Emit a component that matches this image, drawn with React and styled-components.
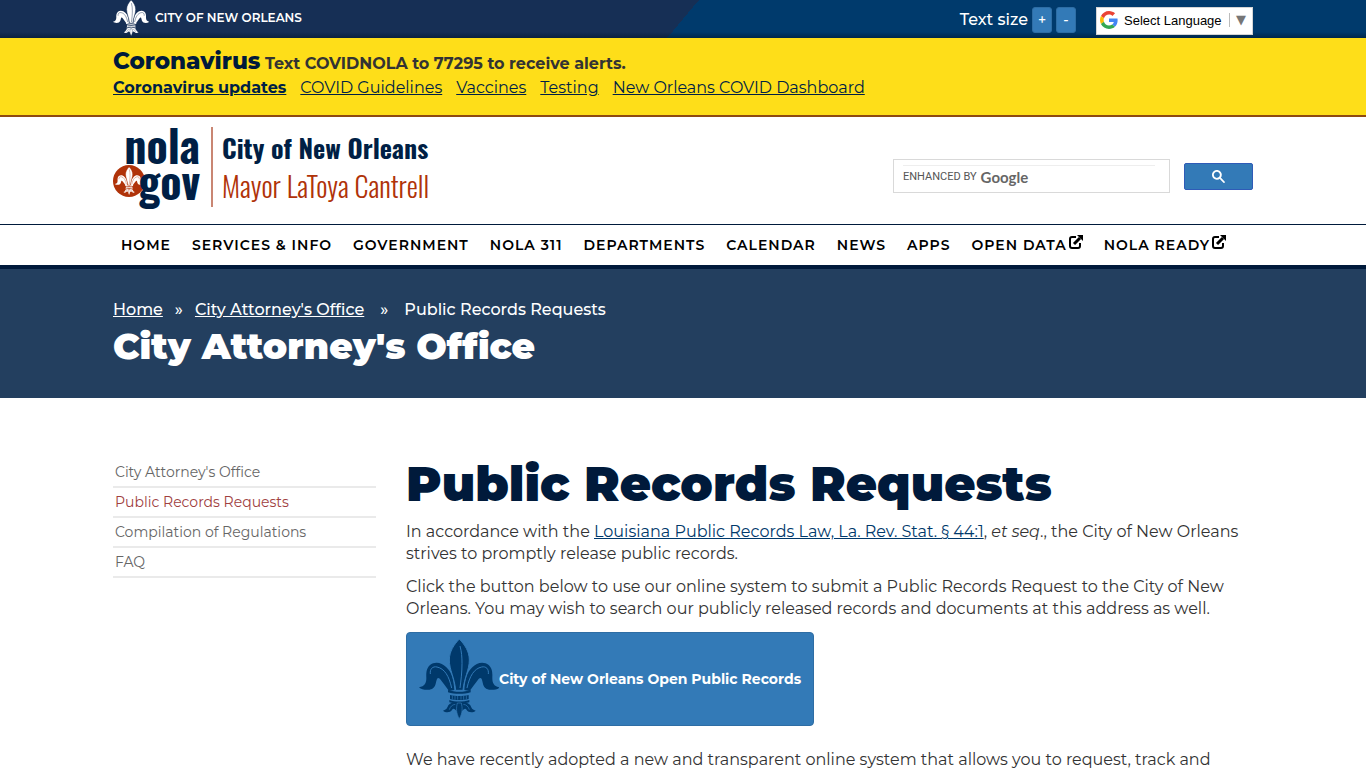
import React from 'react';
import styled, { createGlobalStyle, ThemeProvider } from 'styled-components';

const theme = {
  colors: {
    navy: '#001f45',
    navyDark: '#001a3b',
    hero: '#233f5f',
    blue: '#337ab7',
    blueBorder: '#2e6da4',
    yellow: '#fede19',
    rust: '#b03309',
    text: '#333333',
    muted: '#666666',
    line: '#eaeaea',
    white: '#ffffff',
  },
  fonts: {
    base: "Montserrat, Inter, 'Open Sans', sans-serif",
    logo: "Oswald, 'Roboto Condensed', 'Liberation Sans Narrow', 'Liberation Sans', sans-serif",
  },
};

const navItems = [
  { label: 'Home' },
  { label: 'Services & Info' },
  { label: 'Government' },
  { label: 'NOLA 311' },
  { label: 'Departments' },
  { label: 'Calendar' },
  { label: 'News' },
  { label: 'Apps' },
  { label: 'Open Data', external: true },
  { label: 'NOLA Ready', external: true },
];

const alertLinks = ['COVID Guidelines', 'Vaccines', 'Testing', 'New Orleans COVID Dashboard'];

const sideItems = [
  { label: "City Attorney's Office" },
  { label: 'Public Records Requests', active: true },
  { label: 'Compilation of Regulations' },
  { label: 'FAQ' },
];

const FleurWing = ({ line }) => (
  <>
    <path d="M163 210 C161 180 155 156 139 142 C126 127 104 123 90 135 C77 147 79 162 79 174 C79 190 74 199 57 202 C66 211 86 211 96 207 C108 201 107 186 111 177 C114 172 118 174 123 181 C131 192 139 202 147 213 Z" />
    <path d="M91 162 C89 147 98 138 111 141 C134 146 147 168 155 204" fill="none" stroke={line} strokeWidth="3" />
    <path d="M172 247 C160 246 150 249 145 256 C142 264 139 270 129 272 C137 279 151 278 156 270 C159 264 165 266 170 274 Z" />
    <path d="M166 253 C156 254 151 260 148 269" fill="none" stroke={line} strokeWidth="2" />
  </>
);

const FleurDeLis = ({ size, color, line }) => (
  <svg width={size} height={size} viewBox="57 57 240 240" fill={color} aria-hidden="true">
    <FleurWing line={line} />
    <g transform="translate(356 0) scale(-1 1)">
      <FleurWing line={line} />
    </g>
    <path
      d="M178 57 C162 74 148 94 148 120 C148 150 164 174 167 211 L189 211 C192 174 208 150 208 120 C208 94 194 74 178 57 Z"
      stroke={line}
      strokeWidth="3"
    />
    <path d="M180 78 C185 96 186 112 186 130 C186 158 183 180 180 204" fill="none" stroke={line} strokeWidth="3" />
    <path d="M144 210 C164 217 192 217 212 210 L212 217 C192 223 164 223 144 217 Z" />
    <path d="M150 225 C166 229 190 229 206 225 L206 237 C190 241 166 241 150 237 Z" />
    <path d="M157 227 V238 M165 228 V239 M173 228 V239 M183 228 V239 M191 228 V239 M199 227 V238" stroke={line} strokeWidth="2" />
    <path d="M148 240 C166 246 190 246 208 240 L208 247 C190 252 166 252 148 247 Z" />
    <path d="M172 249 H184 C187 262 189 278 178 296 C167 278 169 262 172 249 Z" stroke={line} strokeWidth="2" />
  </svg>
);

const GoogleMark = () => (
  <svg width="18" height="18" viewBox="0 0 48 48" aria-hidden="true">
    <path fill="#EA4335" d="M24 9.5c3.5 0 6.700 1.200 9.200 3.600l6.900-6.900C35.900 2.400 30.500 0 24 0 14.600 0 6.500 5.400 2.600 13.200l8 6.200C12.400 13.700 17.700 9.500 24 9.500z" />
    <path fill="#4285F4" d="M47 24.600c0-1.600-.2-3.100-.4-4.600H24v9h12.900c-.6 3-2.300 5.500-4.800 7.200l7.700 6C44.400 38 47 32 47 24.600z" />
    <path fill="#FBBC05" d="M10.500 28.600c-.5-1.500-.8-3-.8-4.600s.3-3.100.8-4.600l-8-6.200C.9 16.500 0 20.100 0 24s.9 7.500 2.600 10.800l7.900-6.200z" />
    <path fill="#34A853" d="M24 48c6.500 0 11.900-2.100 15.900-5.800l-7.700-6c-2.200 1.500-4.900 2.300-8.200 2.300-6.300 0-11.600-4.200-13.500-9.900l-8 6.200C6.500 42.600 14.600 48 24 48z" />
  </svg>
);

const ExternalIcon = () => (
  <svg width="14" height="14" viewBox="0 0 14 14" fill="none" stroke="currentColor" strokeWidth="2" aria-hidden="true">
    <path d="M7 2 H3 Q1 2 1 4 V11 Q1 13 3 13 H9 Q11 13 11 11 V8" />
    <path d="M5 9 L11 3" strokeWidth="3" />
    <path d="M8 0 H14 V6 Z" fill="currentColor" stroke="none" />
  </svg>
);

const SearchIcon = () => (
  <svg width="13" height="13" viewBox="0 0 13 13" fill="currentColor" aria-hidden="true">
    <path d="m4.850 7.900c-1.650 0-3.050-1.400-3.050-3.050s1.400-3.050 3.050-3.050 3.050 1.400 3.050 3.050-1.400 3.050-3.050 3.050zm4.450.2-.3 0-.2-.2c.6-.8 1-1.850 1-3.050 0-2.700-2.200-4.850-4.900-4.850s-4.900 2.200-4.900 4.850 2.200 4.900 4.900 4.900c1.200 0 2.300-.4 3.100-1.100l.2.200 0 .6 3.750 3.750 1.100-1.100z" />
  </svg>
);

const App = () => (
  <ThemeProvider theme={theme}>
    <GlobalStyle />
    <TopBar>
      <TopInner>
        <CityLink href="#city">
          <FleurDeLis size={36} color="#ffffff" line="#162f55" />
          City of New Orleans
        </CityLink>
        <TopTools>
          <TextSize>
            Text size
            <SizeButton type="button" aria-label="Increase text size">+</SizeButton>
            <SizeButton type="button" aria-label="Decrease text size">-</SizeButton>
          </TextSize>
          <Language>
            <GoogleMark />
            <LanguageSelect aria-label="Language">
              <option>Select Language</option>
            </LanguageSelect>
            <LanguageArrow aria-hidden="true">▼</LanguageArrow>
          </Language>
        </TopTools>
      </TopInner>
    </TopBar>

    <Alert>
      <Container>
        <AlertText>
          <AlertTitle>Coronavirus</AlertTitle> Text COVIDNOLA to 77295 to receive alerts.
        </AlertText>
        <AlertLinks>
          <AlertLink href="#updates" $strong>Coronavirus updates</AlertLink>
          {alertLinks.map((label) => (
            <AlertLink key={label} href="#covid">{label}</AlertLink>
          ))}
        </AlertLinks>
      </Container>
    </Alert>

    <HeaderInner>
      <Brand href="#home">
        <Wordmark>
          <WordmarkLine>nola</WordmarkLine>
          <WordmarkLine>
            <Seal>
              <FleurDeLis size={28} color="#ffffff" line="#b03309" />
            </Seal>
            gov
          </WordmarkLine>
        </Wordmark>
        <BrandText>
          <BrandCity>City of New Orleans</BrandCity>
          <BrandMayor>Mayor LaToya Cantrell</BrandMayor>
        </BrandText>
      </Brand>
      <SearchForm>
        <SearchBox>
          <SearchField>
            <SearchBrand>ENHANCED BY</SearchBrand>
            <SearchGoogle>Google</SearchGoogle>
            <SearchInput type="text" aria-label="Search" />
          </SearchField>
        </SearchBox>
        <SearchButton type="button" aria-label="Search">
          <SearchIcon />
        </SearchButton>
      </SearchForm>
    </HeaderInner>

    <Nav>
      <NavList>
        {navItems.map((item) => (
          <li key={item.label}>
            <NavLink href="#nav">
              {item.label}
              {item.external && <ExternalIcon />}
            </NavLink>
          </li>
        ))}
      </NavList>
    </Nav>

    <Hero>
      <Container>
        <Breadcrumb>
          <CrumbLink href="#home">Home</CrumbLink>
          <Separator>»</Separator>
          <CrumbLink href="#office">City Attorney's Office</CrumbLink>
          <Separator $wide>»</Separator>
          <span>Public Records Requests</span>
        </Breadcrumb>
        <HeroTitle>City Attorney's Office</HeroTitle>
      </Container>
    </Hero>

    <Content>
      <SideList>
        {sideItems.map((item) => (
          <SideItem key={item.label}>
            <SideLink href="#side" $active={item.active}>{item.label}</SideLink>
          </SideItem>
        ))}
      </SideList>
      <Main>
        <Title>Public Records Requests</Title>
        <Paragraph>
          In accordance with the <TextLink href="#law">Louisiana Public Records Law, La. Rev. Stat. § 44:1</TextLink>,{' '}
          <em>et seq</em>., the City of New Orleans strives to promptly release public records.
        </Paragraph>
        <Paragraph>
          Click the button below to use our online system to submit a Public Records Request to the City of New
          Orleans. You may wish to search our publicly released records and documents at this address as well.
        </Paragraph>
        <RecordsLink href="#records">
          <FleurDeLis size={80} color="#00396b" line="#337ab7" />
          City of New Orleans Open Public Records
        </RecordsLink>
        <Paragraph>
          We have recently adopted a new and transparent online system that allows you to request, track and
        </Paragraph>
      </Main>
    </Content>
  </ThemeProvider>
);

const GlobalStyle = createGlobalStyle`
  * {
    box-sizing: border-box;
  }
  body {
    margin: 0;
    background: #ffffff;
    color: #333333;
    font-family: ${theme.fonts.base};
    font-size: 16px;
    line-height: 22px;
  }
`;
const Container = styled.div`
  width: 100%;
  max-width: 1170px;
  margin: 0 auto;
  padding: 0 15px;
`;
const TopBar = styled.header`
  height: 38px;
  background: linear-gradient(to bottom, transparent 32px, rgba(0, 20, 40, 0.5) 38px),
    linear-gradient(130deg, #162f55 50%, #003a6c 50%);
`;
const TopInner = styled(Container)`
  display: flex;
  justify-content: space-between;
`;
const CityLink = styled.a`
  display: flex;
  align-items: center;
  gap: 6px;
  height: 36px;
  color: ${({ theme }) => theme.colors.white};
  font-size: 12px;
  font-weight: 600;
  text-decoration: none;
  text-transform: uppercase;
`;
const TopTools = styled.div`
  display: flex;
  align-items: flex-start;
  gap: 20px;
  padding-top: 7px;
`;
const TextSize = styled.div`
  display: flex;
  align-items: center;
  gap: 4px;
  color: ${({ theme }) => theme.colors.white};
  font-weight: 500;
`;
const SizeButton = styled.button`
  width: 20px;
  height: 26px;
  padding: 0;
  border: 1px solid ${({ theme }) => theme.colors.blueBorder};
  border-radius: 3px;
  background: ${({ theme }) => theme.colors.blue};
  color: ${({ theme }) => theme.colors.white};
  font-family: inherit;
  font-size: 14px;
  font-weight: 500;
`;
const Language = styled.div`
  display: flex;
  align-items: center;
  width: 157px;
  height: 28px;
  padding: 0 6px 2px 3px;
  border: 1px solid #d5d5d5;
  background: ${({ theme }) => theme.colors.white};
`;
const LanguageSelect = styled.select`
  flex: 1;
  min-width: 0;
  margin-left: 6px;
  padding: 0;
  border: 0;
  appearance: none;
  background: transparent;
  color: #000000;
  font-family: 'Liberation Sans', sans-serif;
  font-size: 13px;
`;
const LanguageArrow = styled.span`
  padding-left: 6px;
  border-left: 1px solid #bbbbbb;
  color: #767676;
  font-family: 'DejaVu Sans', sans-serif;
  font-size: 13px;
  line-height: 14px;
`;
const Alert = styled.section`
  padding: 12px 0 16px;
  border-bottom: 2px solid #8f4a10;
  background: ${({ theme }) => theme.colors.yellow};
`;
const AlertText = styled.p`
  margin: 0;
  font-weight: 700;
  line-height: 26px;
`;
const AlertTitle = styled.strong`
  color: ${({ theme }) => theme.colors.navyDark};
  font-size: 23px;
  font-weight: 800;
  line-height: 22px;
`;
const AlertLinks = styled.div`
  display: flex;
  gap: 14px;
`;
const AlertLink = styled.a`
  color: ${({ theme }) => theme.colors.navy};
  font-weight: ${({ $strong }) => ($strong ? 700 : 400)};
`;
const HeaderInner = styled(Container)`
  display: flex;
  align-items: flex-start;
  justify-content: space-between;
  height: 107px;
  padding-top: 10px;
`;
const Brand = styled.a`
  display: flex;
  font-family: ${({ theme }) => theme.fonts.logo};
  text-decoration: none;
`;
const Wordmark = styled.span`
  display: flex;
  flex-direction: column;
  width: 100px;
  height: 80px;
  padding-right: 11px;
  border-right: 2px solid #c98673;
`;
const WordmarkLine = styled.span`
  display: flex;
  align-items: center;
  justify-content: flex-end;
  height: 36px;
  color: ${({ theme }) => theme.colors.navy};
  font-size: 44px;
  font-weight: 700;
  line-height: 36px;
`;
const Seal = styled.span`
  display: flex;
  align-items: center;
  justify-content: center;
  flex: none;
  width: 32px;
  height: 32px;
  margin-right: -7px;
  border-radius: 50%;
  background: ${({ theme }) => theme.colors.rust};
`;
const BrandText = styled.span`
  display: flex;
  flex-direction: column;
  padding: 2px 0 0 9px;
  line-height: 38px;
  white-space: nowrap;
`;
const BrandCity = styled.span`
  color: ${({ theme }) => theme.colors.navy};
  font-size: 26px;
  font-weight: 700;
`;
const BrandMayor = styled.span`
  color: ${({ theme }) => theme.colors.rust};
  font-size: 28px;
  font-weight: 300;
`;
const SearchForm = styled.form`
  display: flex;
  align-items: center;
  gap: 14px;
  padding-top: 32px;
`;
const SearchBox = styled.div`
  width: 277px;
  height: 34px;
  padding: 5px 14px 5px 9px;
  border: 1px solid #d9d9d9;
`;
const SearchField = styled.label`
  display: flex;
  align-items: center;
  height: 22px;
  border-top: 1px solid #eeeeee;
`;
const SearchBrand = styled.span`
  margin-right: 4px;
  color: #555555;
  font-family: Roboto, sans-serif;
  font-size: 11px;
`;
const SearchGoogle = styled.span`
  color: #666666;
  font-family: Lato, sans-serif;
  font-size: 15px;
  font-weight: 700;
`;
const SearchInput = styled.input`
  flex: 1;
  min-width: 0;
  height: 20px;
  border: 0;
  outline: 0;
  background: transparent;
`;
const SearchButton = styled.button`
  display: flex;
  align-items: center;
  justify-content: center;
  width: 69px;
  height: 27px;
  padding: 0;
  border: 1px solid #2f5bb7;
  border-radius: 2px;
  background: ${({ theme }) => theme.colors.blue};
  color: ${({ theme }) => theme.colors.white};
`;
const Nav = styled.nav`
  border-top: 1px solid ${({ theme }) => theme.colors.navyDark};
  border-bottom: 4px solid ${({ theme }) => theme.colors.navyDark};
`;
const NavList = styled.ul`
  display: flex;
  gap: 21px;
  max-width: 1170px;
  margin: 0 auto;
  padding: 0 23px;
  list-style: none;
`;
const NavLink = styled.a`
  display: flex;
  gap: 2px;
  color: #000000;
  font-size: 14px;
  font-weight: 600;
  letter-spacing: 1px;
  line-height: 40px;
  text-decoration: none;
  text-transform: uppercase;
  white-space: nowrap;

  svg {
    margin-top: 10px;
  }
`;
const Hero = styled.section`
  height: 129px;
  padding-top: 30px;
  background: ${({ theme }) => theme.colors.hero};
  color: ${({ theme }) => theme.colors.white};
`;
const Breadcrumb = styled.nav`
  display: flex;
  font-weight: 500;
`;
const CrumbLink = styled.a`
  color: inherit;
`;
const Separator = styled.span`
  margin: ${({ $wide }) => ($wide ? '0 16px' : '0 12px')};
`;
const HeroTitle = styled.h2`
  margin: 5px 0 0;
  font-size: 36px;
  font-weight: 900;
  line-height: 40px;
`;
const Content = styled(Container)`
  display: grid;
  grid-template-columns: 263px 1fr;
  gap: 30px;
  padding-top: 60px;
`;
const SideList = styled.ul`
  margin: 0;
  padding: 0;
  list-style: none;
`;
const SideItem = styled.li`
  border-bottom: 2px solid ${({ theme }) => theme.colors.line};
`;
const SideLink = styled.a`
  display: block;
  padding: 0 2px;
  color: ${({ theme, $active }) => ($active ? '#a04040' : theme.colors.muted)};
  font-size: 14px;
  line-height: 28px;
  text-decoration: none;
`;
const Main = styled.main`
  min-width: 0;
`;
const Title = styled.h1`
  margin: 0 0 11px;
  color: ${({ theme }) => theme.colors.navyDark};
  font-size: 48px;
  font-weight: 900;
  line-height: 52px;
`;
const Paragraph = styled.p`
  margin: 0 0 11px;
`;
const TextLink = styled.a`
  color: #00396b;
`;
const RecordsLink = styled.a`
  display: inline-flex;
  align-items: center;
  height: 94px;
  margin: 1px 0 23px;
  padding: 0 12px;
  border: 1px solid ${({ theme }) => theme.colors.blueBorder};
  border-radius: 4px;
  background: ${({ theme }) => theme.colors.blue};
  color: ${({ theme }) => theme.colors.white};
  font-size: 14px;
  font-weight: 700;
  text-decoration: none;
`;

export default App;
